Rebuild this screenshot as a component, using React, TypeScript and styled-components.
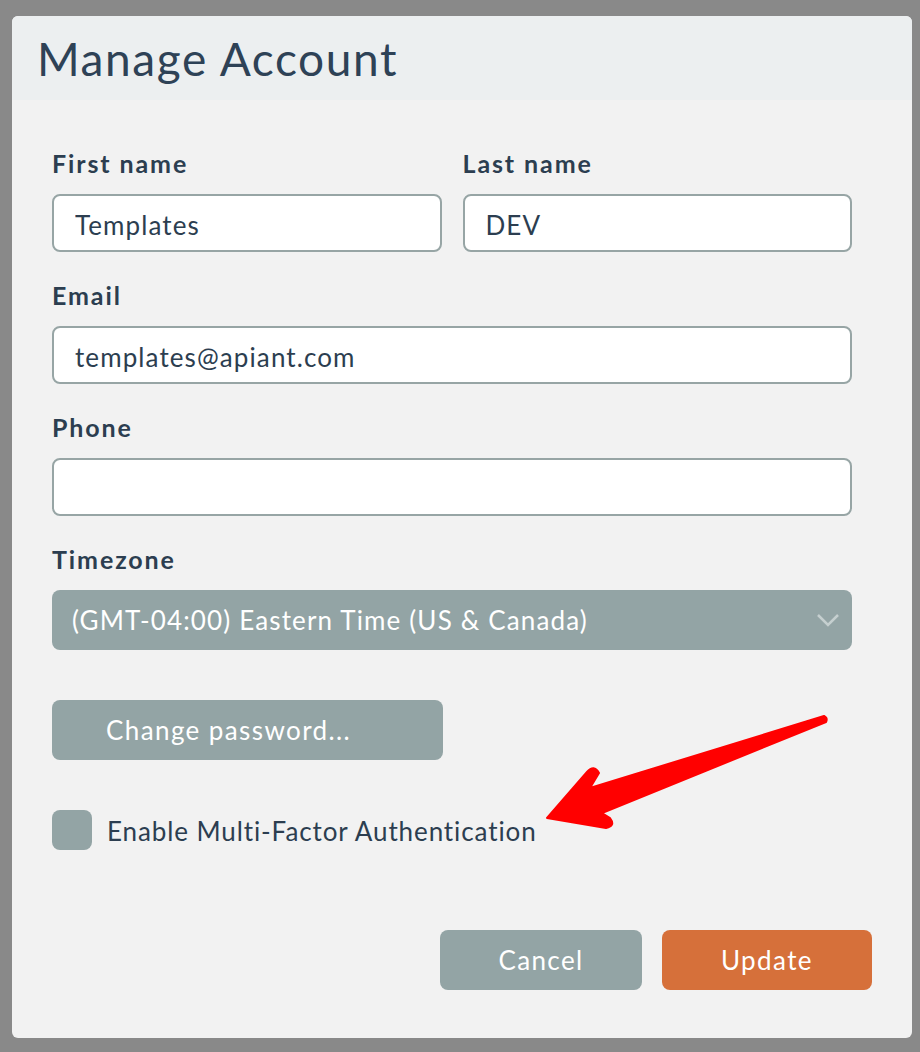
import React from 'react'
import styled, { createGlobalStyle } from 'styled-components'

const Global = createGlobalStyle`
  html, body {
    margin: 0;
    padding: 0;
    background: #898989;
  }
  body {
    padding: 16px 8px 14px 12px;
    font-family: "Lato", "Open Sans", sans-serif;
  }
`

const Card = styled.div`
  position: relative;
  width: 900px;
  background: #f2f2f2;
  border-radius: 6px;
  overflow: hidden;
`

const Header = styled.div`
  height: 84px;
  background: #eceff0;
  display: flex;
  align-items: center;
  padding: 0 25px;
  box-sizing: border-box;
`

const Title = styled.h1`
  margin: 0;
  font-size: 46px;
  font-weight: 400;
  color: #2e4256;
  letter-spacing: 1.6px;
`

const Body = styled.div`
  padding: 48px 40px 48px 40px;
  display: flex;
  flex-direction: column;
`

const Row = styled.div`
  display: flex;
  gap: 21px;
  width: 800px;
`

const Field = styled.div<{ $grow?: boolean }>`
  display: flex;
  flex-direction: column;
  flex: ${p => (p.$grow ? 1 : 'none')};
  width: ${p => (p.$grow ? 'auto' : '800px')};
  margin-bottom: 28px;
`

const Label = styled.label`
  font-size: 25px;
  font-weight: 700;
  line-height: 30px;
  color: #2c3e50;
  letter-spacing: 1.9px;
  margin-bottom: 16px;
`

const Input = styled.input`
  height: 58px;
  box-sizing: border-box;
  border: 2px solid #97a5a5;
  border-radius: 8px;
  background: #fff;
  padding: 4px 21px 0;
  font-family: inherit;
  font-size: 26px;
  letter-spacing: 1.1px;
  color: #2c3e50;
  outline: none;
`

const Select = styled.div`
  height: 60px;
  border-radius: 8px;
  background: #93a4a5;
  color: #fff;
  font-size: 26px;
  letter-spacing: 1.15px;
  display: flex;
  align-items: center;
  justify-content: space-between;
  padding: 0 12px 0 20px;
`

const Chevron = styled.svg`
  width: 24px;
  height: 16px;
`

const GrayButton = styled.button<{ $w: number; $left?: boolean }>`
  width: ${p => p.$w}px;
  height: 60px;
  border: none;
  border-radius: 8px;
  background: #93a4a5;
  color: #fff;
  font-family: inherit;
  font-size: 26px;
  letter-spacing: 1.4px;
  text-align: ${p => (p.$left ? 'left' : 'center')};
  padding: ${p => (p.$left ? '0 0 0 54px' : '0')};
`

const UpdateButton = styled(GrayButton)`
  background: #d6703a;
`

const PasswordWrap = styled.div`
  margin-top: 22px;
`

const CheckRow = styled.div`
  display: flex;
  align-items: center;
  gap: 15px;
  margin-top: 50px;
`

const Box = styled.span`
  width: 40px;
  height: 40px;
  border-radius: 8px;
  background: #93a4a5;
`

const CheckText = styled.span`
  font-size: 26px;
  letter-spacing: 0.9px;
  color: #2c3e50;
  padding-top: 2px;
`

const Actions = styled.div`
  display: flex;
  justify-content: flex-end;
  gap: 20px;
  margin-top: 80px;
`

const Arrow = styled.svg`
  position: absolute;
  left: 0;
  top: 0;
  width: 900px;
  height: 1024px;
  pointer-events: none;
`

export default function App() {
  return (
    <>
      <Global />
      <Card>
        <Header>
          <Title>Manage Account</Title>
        </Header>
        <Body>
          <Row>
            <Field $grow>
              <Label>First name</Label>
              <Input defaultValue="Templates" />
            </Field>
            <Field $grow>
              <Label>Last name</Label>
              <Input defaultValue="DEV" />
            </Field>
          </Row>
          <Field>
            <Label>Email</Label>
            <Input defaultValue="templates@apiant.com" />
          </Field>
          <Field>
            <Label>Phone</Label>
            <Input defaultValue="" />
          </Field>
          <Field>
            <Label>Timezone</Label>
            <Select>
              <span>(GMT-04:00) Eastern Time (US &amp; Canada)</span>
              <Chevron viewBox="0 0 24 16">
                <path d="M2 3 L12 13 L22 3" fill="none" stroke="#c5cfcf" strokeWidth="2.5" />
              </Chevron>
            </Select>
          </Field>
          <PasswordWrap>
            <GrayButton $w={391} $left>Change password...</GrayButton>
          </PasswordWrap>
          <CheckRow>
            <Box />
            <CheckText>Enable Multi-Factor Authentication</CheckText>
          </CheckRow>
          <Actions>
            <GrayButton $w={202}>Cancel</GrayButton>
            <UpdateButton $w={210}>Update</UpdateButton>
          </Actions>
        </Body>
        <Arrow viewBox="0 0 900 1024">
          <path
            d="M535 802 L575 756 Q582 748 587 757 L578 772 L812 700 Q816 702 814 706 L590 797 L598 802 Q604 810 594 812 Z"
            fill="#ff0000"
            stroke="#ff0000"
            strokeWidth="2"
            strokeLinejoin="round"
          />
        </Arrow>
      </Card>
    </>
  )
}
